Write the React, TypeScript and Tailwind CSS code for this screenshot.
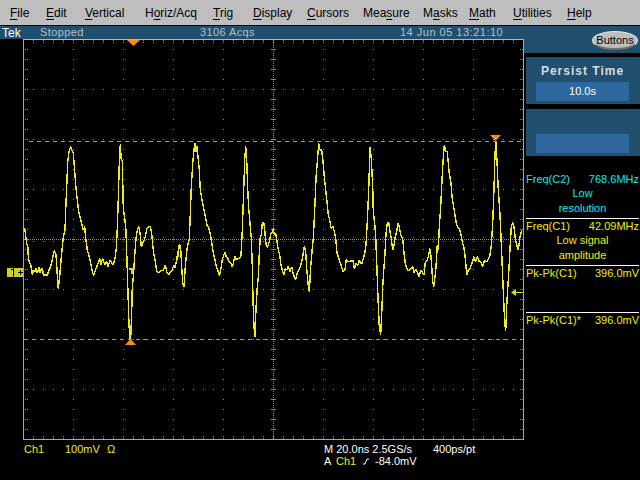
import React from "react";

const seg1: number[][] = [[72,325],[76,335],[78,355],[80,372],[83,375],[85,410],[88,428],[92,435],[95,450],[97,465],[100,450],[104,455],[108,445],[112,460],[118,440],[120,458],[125,445],[128,450],[130,465],[142,465],[147,450],[152,440],[157,420],[162,392],[168,403],[170,435],[173,488],[175,508],[180,458],[184,410],[187,380],[190,350],[195,330],[197,270],[200,200],[203,125],[207,95],[212,80],[216,92],[220,100],[224,155],[228,205],[232,240],[236,275],[240,290],[245,310],[250,330],[254,320],[257,355],[262,390],[268,410],[273,435],[277,455],[281,467],[285,455],[290,440],[295,430],[299,415],[302,435],[308,415],[314,435],[320,425],[324,440],[330,420],[336,430],[340,435],[345,415],[349,385],[352,325],[355,235],[358,130],[361,72],[364,122],[367,120],[370,265],[374,295],[377,320],[379,360],[381,425],[384,520],[387,615],[390,655],[392,655],[395,575],[397,500],[400,470],[404,408],[407,365],[410,340],[414,325],[417,320],[420,338],[424,380],[428,370],[433,360],[437,345],[441,325],[447,320],[451,320],[455,340],[458,375],[462,405],[466,425],[470,455],[478,458],[483,452],[490,450],[496,435],[500,455],[506,465],[512,455],[517,450],[521,435],[526,440],[530,420],[534,410],[538,375]];
const seg2: number[][] = [[0,445],[5,420],[10,405],[13,372],[17,385],[20,440],[23,490],[27,500],[31,440],[35,395],[39,370],[43,360],[46,280],[49,200],[53,130],[57,90],[60,68],[63,95],[66,78],[70,120],[73,150],[76,210],[80,235],[84,255],[88,275],[92,295],[96,315],[100,320],[104,335],[108,355],[112,380],[116,405],[120,420],[124,440],[128,450],[133,467],[138,445],[142,420],[146,405],[150,398],[154,410],[158,415],[162,425],[168,430],[172,442],[176,425],[180,408],[184,420],[188,415],[194,415],[198,405],[202,330],[206,210],[209,120],[212,78],[215,120],[218,205],[221,265],[225,310],[229,355],[232,440],[234,540],[237,620],[240,652],[243,565],[247,500],[250,470],[253,400],[256,350],[259,345],[262,308],[266,308],[269,330],[273,372],[277,382],[283,365],[288,340],[292,335],[295,325],[298,345],[302,340],[306,365],[310,390],[314,405],[318,435],[323,455],[327,465],[331,445],[335,450],[340,438],[345,455],[350,440],[354,460],[358,470],[362,478],[368,455],[374,445],[379,430],[384,405],[388,378],[392,395],[395,445],[399,490],[403,515],[407,440],[411,395],[415,355],[419,270],[423,175],[427,125],[431,70],[435,90],[440,90],[444,125],[448,170],[452,210],[456,245],[460,285],[464,300],[468,325],[474,320],[478,335],[482,355],[486,400],[490,410],[494,425],[498,435],[504,455],[510,450],[514,418],[520,425],[534,422],[538,445]];
const seg3: number[][] = [[14,445],[18,430],[24,435],[28,420],[32,432],[36,430],[40,415],[44,400],[48,375],[52,305],[56,210],[60,80],[64,115],[68,200],[70,275],[74,310],[77,350],[80,425],[84,535],[88,620],[92,645],[96,560],[98,500],[102,440],[105,400],[108,340],[112,310],[116,308],[120,335],[124,355],[128,390],[132,375],[136,350],[140,335],[144,310],[148,320],[152,345],[158,355],[162,400],[166,430],[170,445],[175,452],[182,448],[188,440],[192,458],[198,447],[204,462],[208,470],[212,450],[216,455],[222,465],[226,425],[232,420],[236,405],[239,385],[242,400],[245,440],[248,485],[251,500],[255,470],[258,440],[262,375],[265,390],[268,320],[272,260],[276,180],[279,125],[283,75],[287,95],[292,95],[295,130],[298,160],[303,190],[306,230],[310,255],[314,280],[318,305],[322,320],[328,325],[333,345],[338,370],[342,385],[346,415],[350,465],[355,450],[360,445],[366,430],[372,410],[376,425],[382,410],[388,425],[392,425],[398,440],[404,420],[410,425],[414,420],[420,405],[424,375],[428,310],[432,205],[435,100],[438,65],[441,125],[445,210],[449,270],[453,350],[457,445],[461,540],[464,610],[467,632],[471,540],[476,460],[480,385],[484,320],[488,308],[492,320],[496,355],[500,375],[505,390],[510,350],[515,330]];

// SVG origin: page (0, 39)
const Y0 = 39;
const conv = (s: number[][], ox: number) =>
  s.map(([x, y]) => `${(ox + x / 3).toFixed(1)},${(120 + y / 3 - Y0).toFixed(1)}`).join(" ");
const wave = [conv(seg1, 0), conv(seg2, 175), conv(seg3, 350)].join(" ");

const range = (a: number, b: number, s: number) => {
  const r: number[] = [];
  for (let i = a; i <= b; i += s) r.push(i);
  return r;
};

const L = 24, R = 523, T = 0, B = 400, CX = 273, CY = 200;

function Graticule() {
  const dots: React.ReactElement[] = [];
  const d = (x: number, y: number) =>
    dots.push(<rect key={dots.length} x={x} y={y} width={1} height={1} fill="#909088" />);
  // columns every 50 px, rows every 50 px, a dot every 10 px
  range(73, 473, 50).forEach((x) => {
    if (x === CX) return;
    range(T + 10, B - 10, 10).forEach((y) => d(x, y));
  });
  range(50, 350, 50).forEach((y) => {
    if (y === CY) return;
    range(33, 513, 10).forEach((x) => d(x, y));
  });
  // edge ticks
  range(33, 513, 10).forEach((x) => {
    d(x, T + 1); d(x, T + 3); d(x, B - 3); d(x, B - 1);
  });
  range(10, 390, 10).forEach((y) => {
    d(L + 1, y); d(L + 3, y); d(R - 3, y); d(R - 1, y);
  });
  // centre cross
  range(L, R, 2).forEach((x) => d(x, CY));
  range(T, B, 2).forEach((y) => d(CX, y));
  range(33, 513, 10).forEach((x) => { d(x, CY - 2); d(x, CY + 2); });
  range(10, 390, 10).forEach((y) => { d(CX - 2, y); d(CX + 2, y); d(CX - 1, y); d(CX + 1, y); });

  return (
    <svg width={524} height={401} viewBox="0 0 524 401" className="block" shapeRendering="crispEdges">
      {dots}
      <rect x={23} y={0} width={1} height={401} fill="#a8a898" />
      <rect x={523} y={0} width={1} height={401} fill="#a8a898" />
      <rect x={23} y={0} width={501} height={1} fill="#a8c898" />
      <rect x={23} y={400} width={501} height={1} fill="#a8a898" />
      {/* cursors */}
      <line x1={29} y1={102.5} x2={522} y2={102.5} stroke="#f08c10" strokeDasharray="4 4" />
      <line x1={24} y1={300.5} x2={522} y2={300.5} stroke="#f08c10" strokeDasharray="4 4" />
      {/* trace */}
      <polyline points={wave} fill="none" stroke="#f0f000" strokeWidth={1.4} strokeLinejoin="bevel" />
      {/* trigger T marker */}
      <rect x={129} y={229} width={6} height={2} fill="#d8d820" />
      <rect x={131} y={231} width={2} height={4} fill="#d8d820" />
      {/* cursor markers */}
      <g shapeRendering="auto" fill="#ff8c10">
        <polygon points="127,1 140,1 133.5,7" />
        <polygon points="125,306 136,306 130.5,300" />
        <polygon points="490,96 501,96 495.5,102" />
      </g>
      {/* trigger level arrow */}
      <rect x={512} y={253} width={11} height={1} fill="#d8d820" />
      <polygon points="511,253.5 516,250 516,257" fill="#d8d820" shapeRendering="auto" />
      {/* ground marker */}
      <rect x={7} y={229} width={6} height={9} fill="#d0d020" />
      <rect x={14} y={229} width={9} height={9} fill="#d0d020" />
      <rect x={11} y={230} width={2} height={1} fill="#000" />
      <rect x={18} y={233} width={5} height={1} fill="#000" />
      <rect x={20} y={231} width={1} height={5} fill="#000" />
    </svg>
  );
}

function MenuItem({ pre, u, post, ml }: { pre?: string; u: string; post: string; ml: string }) {
  return (
    <span className={ml}>
      {pre}
      <span className="underline underline-offset-2">{u}</span>
      {post}
    </span>
  );
}

function Divider() {
  return <div className="h-px w-[113px] bg-white" />;
}

function ReadoutRow({ a, b, color }: { a: string; b: string; color: string }) {
  return (
    <div className={`flex h-[14px] w-[113px] items-center justify-between leading-none ${color}`}>
      <span>{a}</span>
      <span>{b}</span>
    </div>
  );
}

export default function App() {
  return (
    <div className="flex h-[480px] w-[640px] flex-col overflow-hidden bg-black font-['Liberation_Sans',Arial,sans-serif] text-[11px]">
      <div className="flex h-[25px] shrink-0 items-center bg-[#bebebe] pl-[10px] text-[12px] leading-none text-black">
        <MenuItem u="F" post="ile" ml="w-[36px]" />
        <MenuItem u="E" post="dit" ml="w-[39px]" />
        <MenuItem u="V" post="ertical" ml="w-[60px]" />
        <MenuItem pre="H" u="o" post="riz/Acq" ml="w-[68px]" />
        <MenuItem u="T" post="rig" ml="w-[40px]" />
        <MenuItem u="D" post="isplay" ml="w-[54px]" />
        <MenuItem u="C" post="ursors" ml="w-[56px]" />
        <MenuItem pre="Mea" u="s" post="ure" ml="w-[60px]" />
        <MenuItem pre="M" u="a" post="sks" ml="w-[46px]" />
        <MenuItem u="M" post="ath" ml="w-[44px]" />
        <MenuItem u="U" post="tilities" ml="w-[54px]" />
        <MenuItem u="H" post="elp" ml="w-[40px]" />
      </div>
      <div className="h-px shrink-0 bg-black" />
      <div className="flex min-h-0 flex-1">
        <div className="flex w-[524px] shrink-0 flex-col">
          <div className="flex h-[13px] shrink-0 items-center bg-[#21506f] leading-none text-[#b4c0c8]">
            <span className="w-[40px] pl-[2px] text-[12px] text-white">Tek</span>
            <span className="w-[160px] tracking-[0.4px]">Stopped</span>
            <span className="w-[200px] tracking-[0.4px]">3106 Acqs</span>
            <span className="tracking-[0.5px]">14 Jun 05 13:21:10</span>
          </div>
          <Graticule />
          <div className="mt-[3px] flex flex-col leading-none text-white">
            <div className="flex h-[12px] items-center">
              <span className="w-[65px] pl-[24px] text-[#f0f000]">Ch1</span>
              <span className="w-[42px] text-[#f0f000] whitespace-nowrap">100mV</span>
              <span className="w-[217px] text-[#f0f000]">Ω</span>
              <span className="w-[109px] whitespace-nowrap">M 20.0ns 2.5GS/s</span>
              <span>400ps/pt</span>
            </div>
            <div className="flex h-[12px] items-center pl-[324px] whitespace-nowrap">
              <span className="w-[12px]">A</span>
              <span className="w-[26px] text-[#f0f000]">Ch1</span>
              <span className="w-[13px]">
                <svg width="8" height="8" viewBox="0 0 8 8" className="block">
                  <polyline points="1,7 3,7 5,2 7,2" fill="none" stroke="#ffffff" strokeWidth="1" />
                </svg>
              </span>
              <span>-84.0mV</span>
            </div>
          </div>
        </div>
        <div className="flex w-[116px] shrink-0 flex-col">
          <div className="flex h-[27px] shrink-0 items-start justify-end bg-[#21506f] pr-[2px] pt-[5px]">
            <div className="flex h-[19px] w-[46px] items-center justify-center rounded-[50%] border border-b-2 border-[#e8e8e8] border-b-[#707070] bg-[#bebebe] text-[11px] leading-none text-black">
              Buttons
            </div>
          </div>
          <div className="ml-[2px] mt-[4px] flex h-[47px] flex-col items-center bg-[#21506f] pr-px">
            <div className="mt-[4px] h-[21px] text-[12px] font-bold leading-[21px] tracking-[1px] text-[#d8dce0]">
              Persist Time
            </div>
            <div className="flex h-[19px] w-[93px] items-center justify-center bg-[#2f689f] leading-none text-white">
              10.0s
            </div>
          </div>
          <div className="ml-[2px] mt-[5px] flex h-[47px] flex-col items-center justify-end bg-[#21506f] pb-[3px] pr-px">
            <div className="h-[19px] w-[93px] bg-[#2f689f]" />
          </div>
          <div className="ml-[2px] mt-[16px] flex flex-col">
            <ReadoutRow a="Freq(C2)" b="768.6MHz" color="text-[#00f0f0]" />
            <div className="h-[15px] w-[113px] text-center leading-[15px] text-[#00f0f0]">Low</div>
            <div className="h-[15px] w-[113px] text-center leading-[15px] text-[#00f0f0]">resolution</div>
            <div className="mt-[2px]"><Divider /></div>
            <ReadoutRow a="Freq(C1)" b="42.09MHz" color="text-[#f0f000]" />
            <div className="h-[15px] w-[113px] text-center leading-[15px] text-[#f0f000]">Low signal</div>
            <div className="h-[15px] w-[113px] text-center leading-[15px] text-[#f0f000]">amplitude</div>
            <div className="mt-[2px]"><Divider /></div>
            <ReadoutRow a="Pk-Pk(C1)" b="396.0mV" color="text-[#f0f000]" />
            <div className="mt-[32px]"><Divider /></div>
            <ReadoutRow a="Pk-Pk(C1)*" b="396.0mV" color="text-[#f0f000]" />
          </div>
        </div>
      </div>
    </div>
  );
}
